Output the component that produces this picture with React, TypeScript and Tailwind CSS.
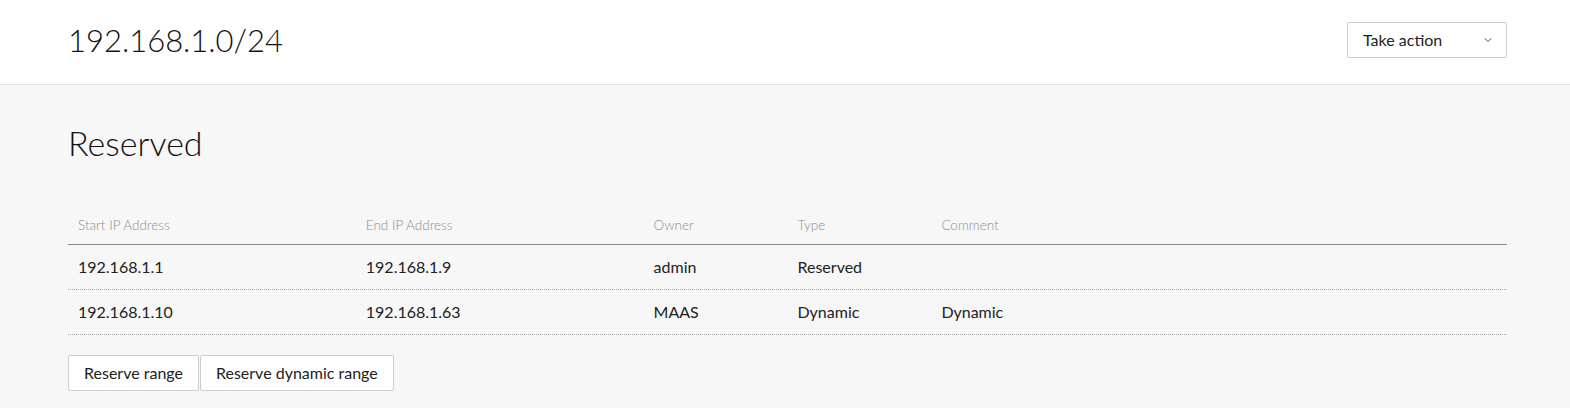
import { ChevronDown } from 'lucide-react'

const ROWS = [
  { start: '192.168.1.1', end: '192.168.1.9', owner: 'admin', type: 'Reserved', comment: '' },
  { start: '192.168.1.10', end: '192.168.1.63', owner: 'MAAS', type: 'Dynamic', comment: 'Dynamic' },
]

const COLS = 'grid grid-cols-[20%_20%_10%_10%_40%]'

export default function App() {
  return (
    <div className="min-h-[408px] bg-[#f7f7f7] font-['Lato','Noto_Sans',sans-serif] text-[#222]">
      {/* header */}
      <header className="flex h-[85px] items-center justify-between border-b border-[#e3e3e3] bg-white pb-[5px] pl-[68px] pr-[63px]">
        <h1 className="text-[31px] font-light leading-10 text-[#111]">192.168.1.0/24</h1>
        <button className="flex h-[36px] w-[160px] items-center justify-between rounded-[2px] border border-[#cdcdcd] bg-white pl-[15px] pr-[12px] text-[16px] text-[#222]">
          Take action
          <ChevronDown className="h-3 w-3 text-[#555]" strokeWidth={2} />
        </button>
      </header>

      <main className="pl-[68px] pr-[63px] pt-[38px]">
        <h2 className="text-[34px] font-light leading-10 text-[#111]">Reserved</h2>

        <div className="mt-[52px]">
          <div className={`${COLS} border-b border-[#8a8a8a] pb-[9px] text-[13.5px] leading-5 font-light text-[#8e8e8e]`}>
            <div className="pl-[10px]">Start IP Address</div>
            <div className="pl-[10px]">End IP Address</div>
            <div className="pl-[10px]">Owner</div>
            <div className="pl-[10px]">Type</div>
            <div className="pl-[10px]">Comment</div>
          </div>
          {ROWS.map((r) => (
            <div key={r.start} className={`${COLS} h-[45px] items-center border-b border-dotted border-[#a8a8a8] text-[16px]`}>
              <div className="pl-[10px]">{r.start}</div>
              <div className="pl-[10px]">{r.end}</div>
              <div className="pl-[10px]">{r.owner}</div>
              <div className="pl-[10px]">{r.type}</div>
              <div className="pl-[10px]">{r.comment}</div>
            </div>
          ))}
        </div>

        <div className="mt-[20px] flex gap-[1px]">
          <button className="h-[36px] rounded-[2px] border border-[#cdcdcd] bg-white px-[15px] text-[16px] text-[#222]">
            Reserve range
          </button>
          <button className="h-[36px] rounded-[2px] border border-[#cdcdcd] bg-white px-[15px] text-[16px] text-[#222]">
            Reserve dynamic range
          </button>
        </div>
      </main>
    </div>
  )
}
